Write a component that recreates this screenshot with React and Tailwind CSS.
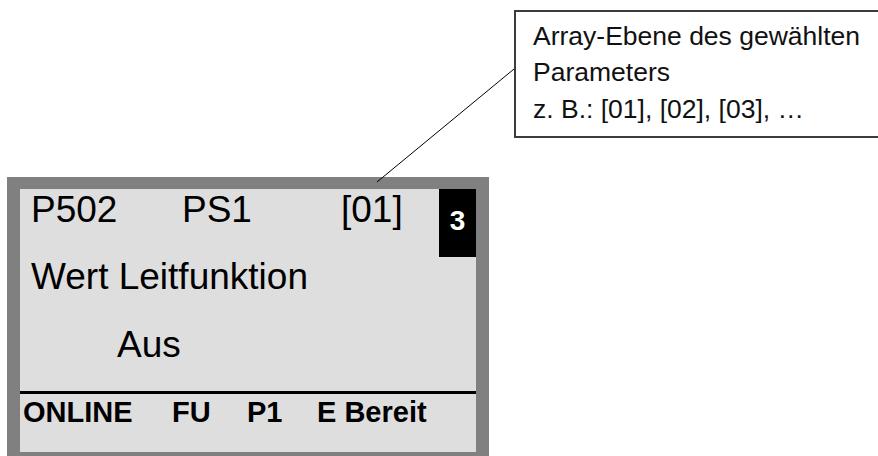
// App.jsx
const font = { fontFamily: '"Liberation Sans", Arial, sans-serif' };

function Callout() {
  return (
    <div className="ml-[514px] mt-[10px] h-[128px] w-[380px] border-2 border-[#3c3c3c] bg-white pl-[17px] pt-[5.5px] text-[26.5px] leading-[36.5px] text-[#111]">
      <div>Array-Ebene des gewählten</div>
      <div>Parameters</div>
      <div>z. B.: [01], [02], [03], …</div>
    </div>
  );
}

function Display() {
  return (
    <div className="ml-[7px] mt-[39px] w-[482px] border-[13px] border-t-[12px] border-[#808080] bg-[#dedede] text-black">
      {/* top row */}
      <div className="flex h-[68px] items-start">
        <div className="flex pl-[11px] pt-[1px] text-[37px] leading-[40px]">
          <span className="w-[151px]">P502</span>
          <span className="w-[159px]">PS1</span>
          <span>[01]</span>
        </div>
        <div className="ml-auto h-[68px] w-[37px] bg-black pt-[16px] text-center text-[28px] font-bold leading-[32px] text-white">
          3
        </div>
      </div>
      <div className="h-[68px] pl-[11px] text-[37px] leading-[40px]">Wert Leitfunktion</div>
      <div className="h-[40px] pl-[97px] text-[37px] leading-[40px]">Aus</div>
      <div className="mt-[26px] h-[3px] bg-black" />
      <div className="mt-[2px] flex h-[56px] pl-[3px] text-[29px] font-bold leading-[32px]">
        <span className="w-[149px]">ONLINE</span>
        <span className="w-[75px]">FU</span>
        <span className="w-[70px]">P1</span>
        <span>E Bereit</span>
      </div>
    </div>
  );
}

export default function App() {
  return (
    <div className="relative h-[456px] w-[878px] overflow-hidden bg-white" style={font}>
      <Callout />
      <Display />
      {/* leader line from callout to the array field */}
      <svg className="pointer-events-none absolute left-0 top-0" width="878" height="456">
        <line x1="377" y1="182" x2="514" y2="69" stroke="#000" strokeWidth="1" />
      </svg>
    </div>
  );
}
